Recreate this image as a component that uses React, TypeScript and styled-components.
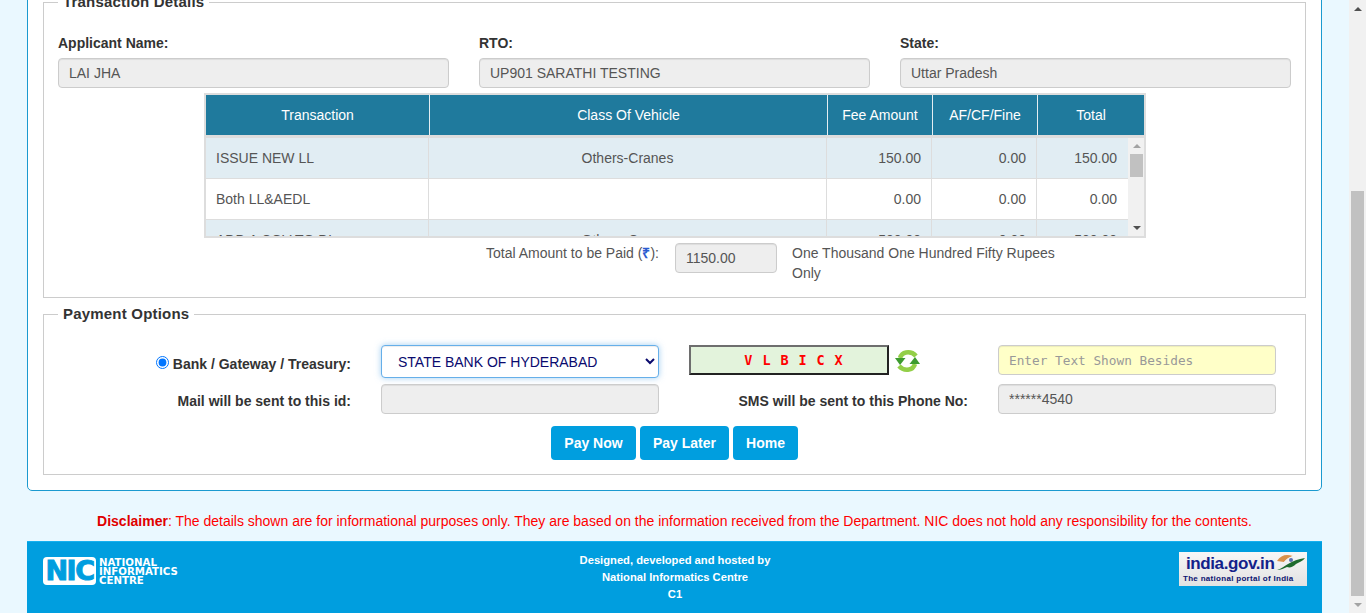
import styled, { createGlobalStyle } from "styled-components";

const GlobalStyle = createGlobalStyle`
  html, body {
    margin: 0;
    height: 100%;
    overflow: hidden;
    background: #eaf8ff;
    font-family: "Liberation Sans", Arial, sans-serif;
    font-size: 14px;
    color: #333;
  }
  * {
    box-sizing: border-box;
  }
`;

const Page = styled.div`
  display: flex;
  height: 613px;
  overflow: hidden;
`;

const Main = styled.div`
  flex: 1;
  min-width: 0;
  margin-top: -9px;
`;

const Card = styled.div`
  margin: 0 27px;
  padding: 0 15px 15px;
  background: #fff;
  border: 1px solid #1b9ad0;
  border-radius: 5px;
`;

const Fieldset = styled.fieldset<{ $gap?: number }>`
  margin: ${(p) => p.$gap || 0}px 0 0;
  padding: 0 14px;
  min-width: 0;
  border: 1px solid #ccc;
`;

const Legend = styled.legend`
  margin-left: 0;
  padding: 0 5px;
  font-size: 15px;
  font-weight: bold;
  line-height: 20px;
  letter-spacing: 0.2px;
  color: #333;
`;

const InfoGrid = styled.div`
  display: grid;
  grid-template-columns: repeat(3, 1fr);
  column-gap: 30px;
  padding-top: 21px;
`;

const FieldLabel = styled.label`
  display: block;
  font-weight: bold;
  line-height: 20px;
  margin-bottom: 5px;
`;

const TextBox = styled.input`
  display: block;
  width: 100%;
  height: 30px;
  padding: 0 10px;
  font: 14px "Liberation Sans", Arial, sans-serif;
  color: #555;
  background: #eee;
  border: 1px solid #ccc;
  border-radius: 4px;
  outline: none;
  box-shadow: inset 0 1px 1px rgba(0, 0, 0, 0.075);
`;

const TableFrame = styled.div`
  width: 942px;
  height: 145px;
  margin: 5px 0 0 146px;
  border: 2px solid #ddd;
  background: #fff;
`;

const Table = styled.table`
  width: 100%;
  table-layout: fixed;
  border-collapse: separate;
  border-spacing: 0;
`;

const HeadCell = styled.th`
  height: 40px;
  padding: 0;
  font-size: 14px;
  font-weight: normal;
  color: #fff;
  background: #1f7a9d;
  border-right: 1px solid #e4eef2;
  &:last-child {
    border-right: 0;
  }
`;

const TableBody = styled.div`
  display: flex;
  height: 101px;
  overflow: hidden;
  border-top: 3px solid #ddd;
`;

const BodyScroll = styled.div`
  flex: none;
  width: 922px;
  height: 98px;
  overflow: hidden;
`;

const Row = styled.tr<{ $striped?: boolean }>`
  background: ${(p) => (p.$striped ? "#e1edf3" : "#fff")};
`;

const Cell = styled.td<{ $align?: string }>`
  height: 41px;
  padding: 0 10px;
  text-align: ${(p) => p.$align || "left"};
  color: #555;
  border-right: 1px solid #ddd;
  border-bottom: 1px solid #ddd;
  &:last-child {
    padding-right: 11px;
    border-right: 0;
  }
`;

const ScrollTrack = styled.div<{ $width: number }>`
  flex: none;
  width: ${(p) => p.$width}px;
  display: flex;
  flex-direction: column;
  align-items: center;
  background: #f1f1f1;
`;

const ArrowButton = styled.div<{ $down?: boolean; $dark?: boolean; $height: number }>`
  flex: none;
  width: 100%;
  height: ${(p) => p.$height}px;
  display: flex;
  align-items: center;
  justify-content: center;
  margin-top: ${(p) => (p.$down ? "auto" : "0")};
  &::before {
    content: "";
    border-left: 4px solid transparent;
    border-right: 4px solid transparent;
    ${(p) => (p.$down ? "border-top" : "border-bottom")}: 4px solid ${(p) => (p.$dark ? "#505050" : "#a3a3a3")};
  }
`;

const ScrollThumb = styled.div<{ $height: number; $gap: number }>`
  flex: none;
  width: 13px;
  height: ${(p) => p.$height}px;
  margin-top: ${(p) => p.$gap}px;
  background: #c1c1c1;
`;

const AmountRow = styled.div`
  display: flex;
  align-items: flex-start;
  padding: 5px 0 14px 428px;
  line-height: 20px;
  color: #555;
`;

const AmountLabel = styled.div`
  width: 189px;
`;

const Rupee = styled.span`
  color: #2a5bd0;
  font-weight: bold;
`;

const AmountBox = styled(TextBox)`
  width: 102px;
`;

const AmountWords = styled.div`
  width: 280px;
  margin-left: 15px;
`;

const PaymentGrid = styled.div`
  display: grid;
  grid-template-columns: 278px 278px 279px 278px;
  grid-template-rows: 33px 30px;
  column-gap: 30px;
  row-gap: 6px;
  padding: 21px 0 0 15px;
`;

const RowLabel = styled.label<{ $top: number }>`
  display: flex;
  align-items: center;
  justify-content: flex-end;
  padding-top: ${(p) => p.$top}px;
  font-weight: bold;
  color: #333;
`;

const Radio = styled.input`
  width: 13px;
  height: 13px;
  margin: 0 4px 4px 0;
`;

const BankSelect = styled.select`
  width: 100%;
  height: 33px;
  padding: 0 12px;
  font: 14px "Liberation Sans", Arial, sans-serif;
  color: #0a0a6e;
  background: #fff;
  border: 1px solid #66afe9;
  border-radius: 4px;
  outline: none;
  box-shadow: inset 0 1px 1px rgba(0, 0, 0, 0.075), 0 0 6px rgba(102, 175, 233, 0.6);
`;

const CaptchaCell = styled.div`
  display: flex;
  align-items: flex-start;
  gap: 5px;
`;

const Captcha = styled.div`
  width: 200px;
  height: 30px;
  padding-left: 10px;
  border: 2px solid;
  border-color: #6e6e6e #222 #222 #6e6e6e;
  background: #e3f3dc;
  color: #f00;
  font: bold 13.5px "DejaVu Sans Mono", monospace;
  letter-spacing: 0.9px;
  line-height: 26px;
  text-align: center;
  white-space: pre;
`;

const RefreshIcon = styled.svg`
  width: 27px;
  height: 24px;
  margin-top: 4px;
`;

const CaptchaInput = styled(TextBox)`
  background: #ffffc8;
  font: 12.75px "DejaVu Sans Mono", monospace;
  &::placeholder {
    color: #999;
    opacity: 1;
  }
`;

const ButtonRow = styled.div`
  display: flex;
  justify-content: center;
  gap: 4px;
  padding: 12px 0 14px;
`;

const Button = styled.button<{ $width: number }>`
  width: ${(p) => p.$width}px;
  height: 34px;
  padding: 0;
  font: bold 14px "Liberation Sans", Arial, sans-serif;
  color: #fff;
  background: #009edf;
  border: 0;
  border-radius: 4px;
`;

const Disclaimer = styled.div`
  margin: 20px 27px 0;
  height: 30px;
  line-height: 20px;
  text-align: center;
  color: #f00;
  b {
    color: #e00000;
  }
`;

const Footer = styled.div`
  display: flex;
  align-items: flex-start;
  justify-content: space-between;
  height: 80px;
  margin: 0 27px;
  padding: 10px 15px 0 16px;
  background: #009edf;
  border-top: 1px solid #16b0ef;
`;

const FooterText = styled.div`
  flex: 1;
  padding-right: 8px;
  text-align: center;
  font-size: 11.2px;
  font-weight: bold;
  line-height: 17px;
  color: #fff;
`;

const NicLogo = styled.div`
  flex: none;
  width: 136px;
  display: flex;
  align-items: center;
  gap: 3px;
  margin-top: 5px;
`;

const NicBadge = styled.div`
  flex: none;
  width: 53px;
  height: 28px;
  overflow: hidden;
  text-align: center;
  background: #fff;
  border-radius: 4px;
  color: #009edf;
  font: bold 27px/28px "DejaVu Sans", sans-serif;
  letter-spacing: -1.5px;
  -webkit-text-stroke: 1px #009edf;
`;

const NicName = styled.div`
  font: bold 10.2px/9px "DejaVu Sans", sans-serif;
  color: #fff;
`;

const PortalLogo = styled.div`
  position: relative;
  flex: none;
  width: 128px;
  height: 34px;
  padding: 1px 0 0 4px;
  background: linear-gradient(#f7f7f7, #e2e2e2);
`;

const PortalName = styled.div`
  margin-left: 3px;
  font-size: 17px;
  font-weight: bold;
  line-height: 21px;
  letter-spacing: -0.4px;
  color: #13228a;
`;

const PortalTag = styled.div`
  font-size: 8px;
  font-weight: bold;
  line-height: 9px;
  letter-spacing: 0.3px;
  color: #0c1470;
`;

const PortalFlag = styled.svg`
  position: absolute;
  top: 1px;
  right: 2px;
  width: 29px;
  height: 18px;
`;

const rows = [
  { name: "ISSUE NEW LL", cov: "Others-Cranes", fee: "150.00", fine: "0.00", total: "150.00" },
  { name: "Both LL&AEDL", cov: "", fee: "0.00", fine: "0.00", total: "0.00" },
  { name: "ADD A COV TO DL", cov: "Others-Cranes", fee: "500.00", fine: "0.00", total: "500.00" },
];

const App = (): JSX.Element => {
  return (
    <>
      <GlobalStyle />
      <Page>
        <Main>
          <Card>
            <Fieldset>
              <Legend>Transaction Details</Legend>
              <InfoGrid>
                <div>
                  <FieldLabel>Applicant Name:</FieldLabel>
                  <TextBox readOnly value="LAI JHA" />
                </div>
                <div>
                  <FieldLabel>RTO:</FieldLabel>
                  <TextBox readOnly value="UP901 SARATHI TESTING" />
                </div>
                <div>
                  <FieldLabel>State:</FieldLabel>
                  <TextBox readOnly value="Uttar Pradesh" />
                </div>
              </InfoGrid>
              <TableFrame>
                <Table>
                  <colgroup>
                    <col width={224} />
                    <col width={398} />
                    <col width={105} />
                    <col width={105} />
                    <col width={106} />
                  </colgroup>
                  <thead>
                    <tr>
                      <HeadCell>Transaction</HeadCell>
                      <HeadCell>Class Of Vehicle</HeadCell>
                      <HeadCell>Fee Amount</HeadCell>
                      <HeadCell>AF/CF/Fine</HeadCell>
                      <HeadCell>Total</HeadCell>
                    </tr>
                  </thead>
                </Table>
                <TableBody>
                  <BodyScroll>
                    <Table>
                      <colgroup>
                        <col width={223} />
                        <col width={398} />
                        <col width={105} />
                        <col width={105} />
                        <col width={91} />
                      </colgroup>
                      <tbody>
                        {rows.map((r, i) => (
                          <Row key={r.name} $striped={i % 2 === 0}>
                            <Cell>{r.name}</Cell>
                            <Cell $align="center">{r.cov}</Cell>
                            <Cell $align="right">{r.fee}</Cell>
                            <Cell $align="right">{r.fine}</Cell>
                            <Cell $align="right">{r.total}</Cell>
                          </Row>
                        ))}
                      </tbody>
                    </Table>
                  </BodyScroll>
                  <ScrollTrack $width={17}>
                    <ArrowButton $height={16} />
                    <ScrollThumb $height={23} $gap={0} />
                    <ArrowButton $down $dark $height={17} />
                  </ScrollTrack>
                </TableBody>
              </TableFrame>
              <AmountRow>
                <AmountLabel>
                  Total Amount to be Paid (<Rupee>₹</Rupee>):
                </AmountLabel>
                <AmountBox readOnly value="1150.00" />
                <AmountWords>One Thousand One Hundred Fifty Rupees Only</AmountWords>
              </AmountRow>
            </Fieldset>

            <Fieldset $gap={6}>
              <Legend>Payment Options</Legend>
              <PaymentGrid>
                <RowLabel $top={5}>
                  <Radio type="radio" name="mode" defaultChecked />
                  Bank / Gateway / Treasury:
                </RowLabel>
                <BankSelect defaultValue="sbh">
                  <option value="sbh">STATE BANK OF HYDERABAD</option>
                </BankSelect>
                <CaptchaCell>
                  <Captcha>V L B I C X</Captcha>
                  <RefreshIcon viewBox="0 0 27 24">
                    <path d="M22 7C19 3.500 15 3 12 3.500 9 4 7 6 6 9" fill="none" stroke="#93cf48" strokeWidth="4.500" />
                    <path d="M5 17c3 3.500 7 4 10 3.500 3-.5 5-2.500 6-5.500" fill="none" stroke="#93cf48" strokeWidth="4.500" />
                    <polygon points="1,9 11.500,9 6,16" fill="#3d9b2f" />
                    <polygon points="15.500,15 26,15 21,8" fill="#3d9b2f" />
                  </RefreshIcon>
                </CaptchaCell>
                <CaptchaInput placeholder="Enter Text Shown Besides" />
                <RowLabel $top={4}>Mail will be sent to this id:</RowLabel>
                <TextBox readOnly />
                <RowLabel $top={4}>SMS will be sent to this Phone No:</RowLabel>
                <TextBox readOnly value="******4540" />
              </PaymentGrid>
              <ButtonRow>
                <Button $width={85}>Pay Now</Button>
                <Button $width={89}>Pay Later</Button>
                <Button $width={65}>Home</Button>
              </ButtonRow>
            </Fieldset>
          </Card>

          <Disclaimer>
            <b>Disclaimer</b>: The details shown are for informational purposes only. They are based on the information
            received from the Department. NIC does not hold any responsibility for the contents.
          </Disclaimer>

          <Footer>
            <NicLogo>
              <NicBadge>NIC</NicBadge>
              <NicName>
                NATIONAL
                <br />
                INFORMATICS
                <br />
                CENTRE
              </NicName>
            </NicLogo>
            <FooterText>
              Designed, developed and hosted by
              <br />
              National Informatics Centre
              <br />
              C1
            </FooterText>
            <PortalLogo>
              <PortalName>india.gov.in</PortalName>
              <PortalTag>The national portal of India</PortalTag>
              <PortalFlag viewBox="0 0 29 18">
                <path d="M1 8C5 2 10 1 17 3c-4 1-7 3-9 6z" fill="#d9914a" />
                <path d="M8 9c3-3 6-5 9-6l5 1c-4 1-6 3-8 5z" fill="#f2f2f2" />
                <circle cx="15" cy="7" r="2" fill="#5d6fb0" />
                <path d="M1 17c4-1 7-4 11-6 5-3 10-5 17-6-2 3-6 4-9 6-3 3-6 4-9 3-3 1-6 3-10 3z" fill="#1e6b2e" />
              </PortalFlag>
            </PortalLogo>
          </Footer>
        </Main>

        <ScrollTrack $width={17}>
          <ArrowButton $height={17} $dark />
          <ScrollThumb $height={405} $gap={174} />
          <ArrowButton $down $height={17} />
        </ScrollTrack>
      </Page>
    </>
  );
};

export default App;
